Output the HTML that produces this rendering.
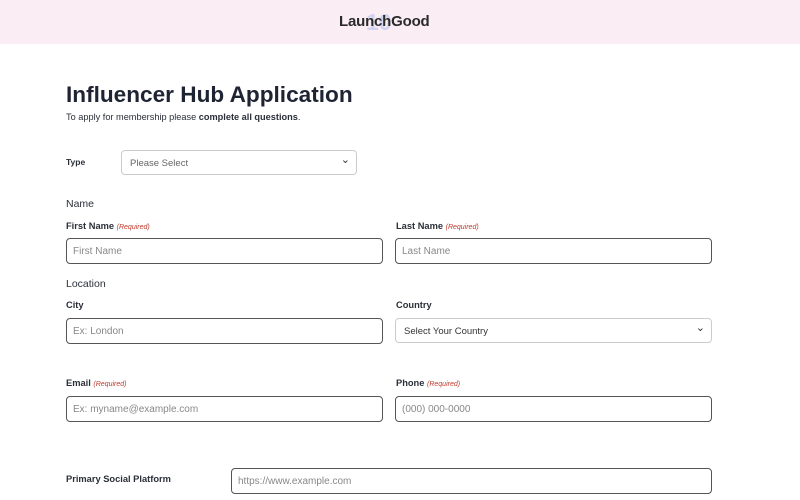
<!DOCTYPE html>
<html><head><style>
*{box-sizing:border-box;margin:0;padding:0}
body{width:800px;height:500px;overflow:hidden;background:#fff;font-family:"Liberation Sans",sans-serif;color:#2b2f38;position:relative}
.hdr{position:absolute;left:0;top:0;width:800px;height:44px;background:#faedf4}
.logo{position:absolute;left:339px;top:13px;font-size:15px;font-weight:bold;color:#2a2a2a;letter-spacing:-0.2px}
.ten{position:absolute;left:366px;top:9px;font-size:23px;font-weight:bold;color:#b9c3f0;opacity:.6}
.a{position:absolute}
h1{position:absolute;left:66px;top:82px;font-size:22.6px;font-weight:bold;color:#1f2433}
.sub{left:66px;top:112px;font-size:9.2px}
.lbl{font-size:9.3px;font-weight:bold}
.sec{font-size:10.5px}
.req{font-size:7px;font-style:italic;color:#c0392b;font-weight:normal}
.in{position:absolute;height:26px;border:1px solid #555;border-radius:4px;font-size:10px;color:#888;padding:7px 6px}
.sel{position:absolute;height:25px;border:1px solid #ccc;border-radius:4px;font-size:9.5px;color:#333;padding:7px 8px}
.sel:after{content:"⌄";position:absolute;right:6px;top:2px;font-size:11px;color:#333}
</style></head><body>
<div class="hdr"><span class="ten">10</span><span class="logo">LaunchGood</span></div>
<h1>Influencer Hub Application</h1>
<div class="a sub">To apply for membership please <b>complete all questions</b>.</div>
<div class="a lbl" style="left:66px;top:157px;font-size:8.5px">Type</div>
<div class="sel" style="left:121px;top:150px;width:236px;color:#666">Please Select</div>
<div class="a sec" style="left:66px;top:198px">Name</div>
<div class="a lbl" style="left:66px;top:221px">First Name <span class="req">(Required)</span></div>
<div class="in" style="left:66px;top:238px;width:317px">First Name</div>
<div class="a lbl" style="left:396px;top:221px">Last Name <span class="req">(Required)</span></div>
<div class="in" style="left:395px;top:238px;width:317px">Last Name</div>
<div class="a sec" style="left:66px;top:278px">Location</div>
<div class="a lbl" style="left:66px;top:300px">City</div>
<div class="in" style="left:66px;top:318px;width:317px">Ex: London</div>
<div class="a lbl" style="left:396px;top:300px">Country</div>
<div class="sel" style="left:395px;top:318px;width:317px">Select Your Country</div>
<div class="a lbl" style="left:66px;top:378px">Email <span class="req">(Required)</span></div>
<div class="in" style="left:66px;top:396px;width:317px">Ex: myname@example.com</div>
<div class="a lbl" style="left:396px;top:378px">Phone <span class="req">(Required)</span></div>
<div class="in" style="left:395px;top:396px;width:317px">(000) 000-0000</div>
<div class="a lbl" style="left:66px;top:474px">Primary Social Platform</div>
<div class="in" style="left:231px;top:468px;width:481px">https://www.example.com</div>
</body></html>
